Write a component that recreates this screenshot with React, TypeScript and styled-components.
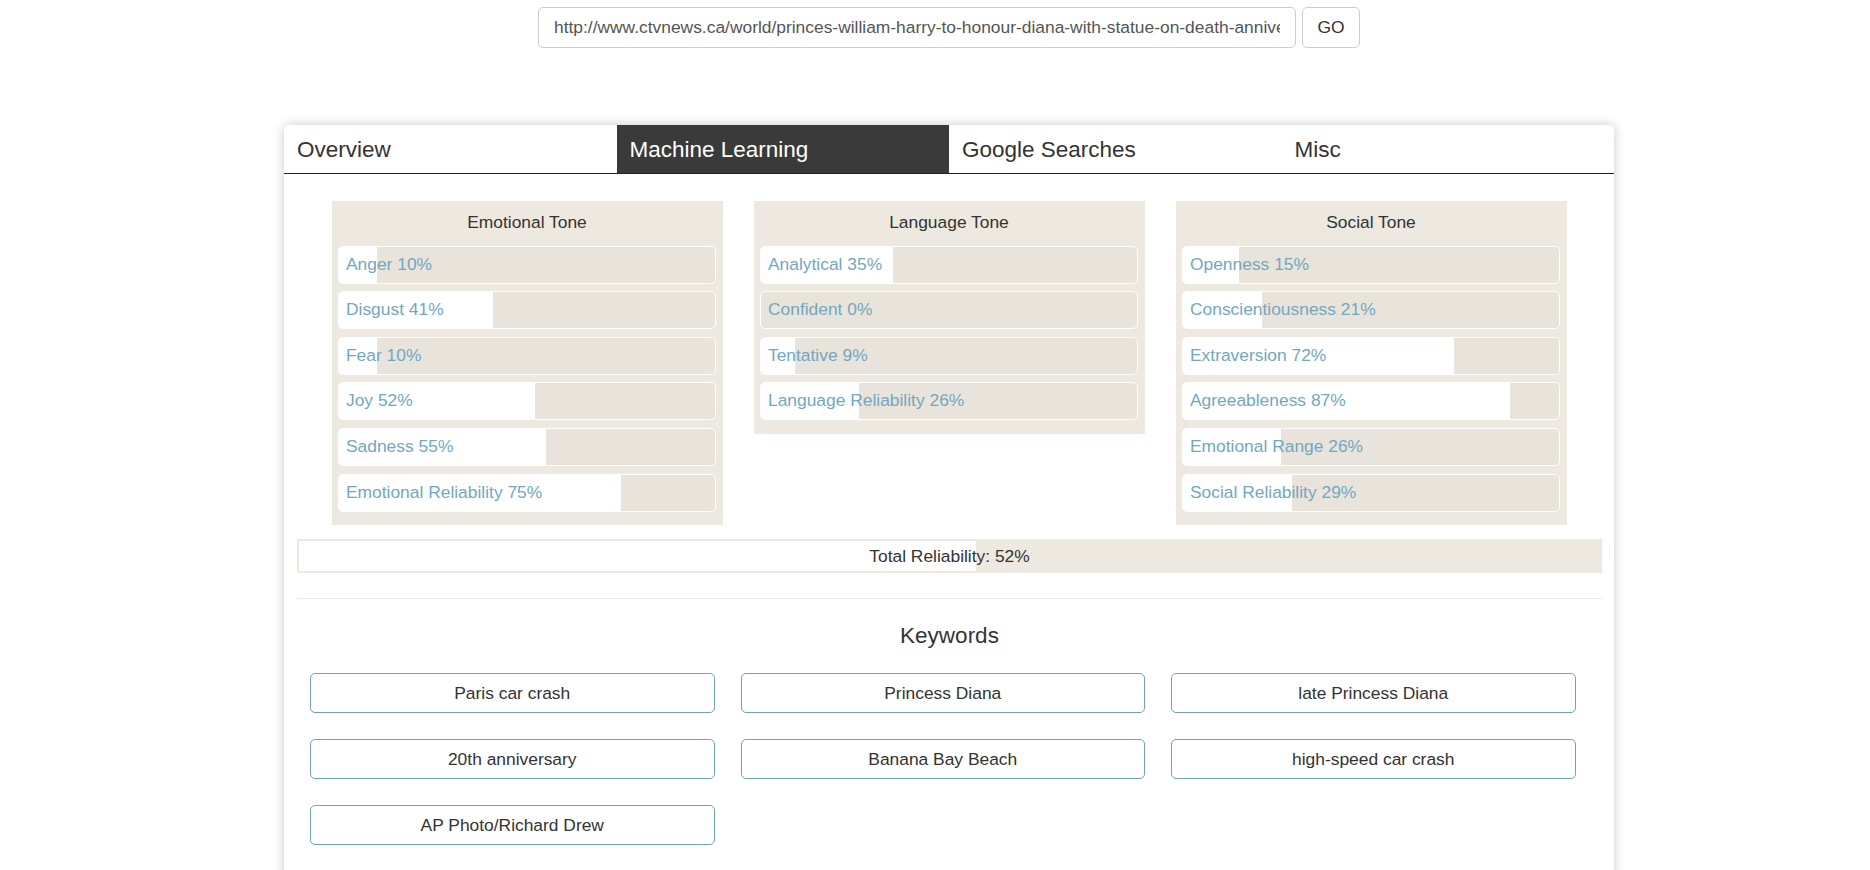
import styled, { createGlobalStyle } from "styled-components";

type Meter = {
  label: string;
  value: number;
};

type TonePanel = {
  title: string;
  items: Meter[];
};

const panels: TonePanel[] = [
  {
    title: "Emotional Tone",
    items: [
      { label: "Anger", value: 10 },
      { label: "Disgust", value: 41 },
      { label: "Fear", value: 10 },
      { label: "Joy", value: 52 },
      { label: "Sadness", value: 55 },
      { label: "Emotional Reliability", value: 75 },
    ],
  },
  {
    title: "Language Tone",
    items: [
      { label: "Analytical", value: 35 },
      { label: "Confident", value: 0 },
      { label: "Tentative", value: 9 },
      { label: "Language Reliability", value: 26 },
    ],
  },
  {
    title: "Social Tone",
    items: [
      { label: "Openness", value: 15 },
      { label: "Conscientiousness", value: 21 },
      { label: "Extraversion", value: 72 },
      { label: "Agreeableness", value: 87 },
      { label: "Emotional Range", value: 26 },
      { label: "Social Reliability", value: 29 },
    ],
  },
];

const keywords = [
  "Paris car crash",
  "Princess Diana",
  "late Princess Diana",
  "20th anniversary",
  "Banana Bay Beach",
  "high-speed car crash",
  "AP Photo/Richard Drew",
];

const tabs = ["Overview", "Machine Learning", "Google Searches", "Misc"];

const GlobalStyle = createGlobalStyle`
  * {
    box-sizing: border-box;
  }
  body {
    margin: 0;
    background: #fff;
    font-family: "Liberation Sans", Arial, sans-serif;
    color: #333;
  }
`;

export default function App() {
  return (
    <>
      <GlobalStyle />
      <Page>
        <Container>
          <SearchBar>
            <UrlInput
              readOnly
              defaultValue="http://www.ctvnews.ca/world/princes-william-harry-to-honour-diana-with-statue-on-death-anniversary-1.3543576"
            />
            <GoButton>GO</GoButton>
          </SearchBar>

          <Card>
            <TabBar>
              {tabs.map((t) => (
                <Tab key={t} $active={t === "Machine Learning"}>
                  {t}
                </Tab>
              ))}
            </TabBar>

            <CardBody>
              <PanelRow>
                {panels.map((p) => (
                  <Panel key={p.title}>
                    <PanelTitle>{p.title}</PanelTitle>
                    <MeterList>
                      {p.items.map((m) => (
                        <MeterBar key={m.label} $pct={m.value}>
                          {m.label} {m.value}%
                        </MeterBar>
                      ))}
                    </MeterList>
                  </Panel>
                ))}
              </PanelRow>

              <TotalBar $pct={52}>Total Reliability: 52%</TotalBar>

              <Divider />

              <SectionTitle>Keywords</SectionTitle>
              <KeywordGrid>
                {keywords.map((k) => (
                  <Keyword key={k}>{k}</Keyword>
                ))}
              </KeywordGrid>
            </CardBody>
          </Card>
        </Container>
      </Page>
    </>
  );
}

const Page = styled.div`
  padding-left: 28px;
  min-height: 870px;
`;

const Container = styled.div`
  width: 1330px;
  margin: 0 auto;
`;

const SearchBar = styled.div`
  display: flex;
  justify-content: center;
  gap: 6px;
  padding-top: 7px;
`;

const UrlInput = styled.input`
  width: 758px;
  height: 41px;
  padding: 0 15px;
  border: 1px solid #ccc;
  border-radius: 5px;
  font-family: inherit;
  font-size: 17.4px;
  color: #555;
  outline: none;
`;

const GoButton = styled.button`
  width: 58px;
  height: 41px;
  border: 1px solid #ccc;
  border-radius: 5px;
  background: #fff;
  font-family: inherit;
  font-size: 17.4px;
  color: #333;
`;

const Card = styled.div`
  margin-top: 77px;
  background: #fff;
  border-radius: 5px;
  box-shadow: 0 0 12px rgba(0, 0, 0, 0.22);
  padding-bottom: 40px;
`;

const TabBar = styled.div`
  display: grid;
  grid-template-columns: repeat(4, 1fr);
  border-bottom: 1px solid #222;
`;

const Tab = styled.div<{ $active?: boolean }>`
  height: 48px;
  line-height: 50px;
  padding-left: 13px;
  font-size: 22.5px;
  color: ${(p) => (p.$active ? "#fff" : "#333")};
  background: ${(p) => (p.$active ? "#3a3a3a" : "transparent")};
  &:first-child {
    border-top-left-radius: 5px;
  }
`;

const CardBody = styled.div`
  padding: 0 12px 0 13px;
`;

const PanelRow = styled.div`
  display: flex;
  justify-content: center;
  align-items: flex-start;
  gap: 31px;
  padding-top: 27px;
`;

const Panel = styled.div`
  width: 391px;
  background: #ede9e0;
  padding: 0 7px 13.5px 6px;
`;

const PanelTitle = styled.div`
  height: 44.7px;
  line-height: 42.5px;
  text-align: center;
  font-size: 17.4px;
  color: #333;
`;

const MeterList = styled.div`
  display: flex;
  flex-direction: column;
  gap: 7.6px;
`;

const MeterBar = styled.div<{ $pct: number }>`
  height: 38px;
  line-height: 34.5px;
  padding-left: 7px;
  border: 1px solid #fff;
  border-radius: 5px;
  font-size: 17.4px;
  color: #72a7bf;
  background: linear-gradient(
    to right,
    #fff ${(p) => p.$pct}%,
    #e8e4dc ${(p) => p.$pct}%
  );
`;

const TotalBar = styled.div<{ $pct: number }>`
  margin-top: 14px;
  height: 34px;
  line-height: 30px;
  padding: 2px;
  text-align: center;
  font-size: 17.4px;
  color: #333;
  background: linear-gradient(
        to right,
        #fff ${(p) => p.$pct}%,
        #ede9e0 ${(p) => p.$pct}%
      )
      content-box,
    #ede9e0;
`;

const Divider = styled.hr`
  margin: 25px 0 0;
  border: 0;
  border-top: 1px solid #eee;
`;

const SectionTitle = styled.h4`
  margin: 22.5px 0 0;
  line-height: 27px;
  text-align: center;
  font-size: 22.5px;
  font-weight: 400;
  color: #333;
`;

const KeywordGrid = styled.div`
  display: grid;
  grid-template-columns: repeat(3, 404.5px);
  column-gap: 26px;
  row-gap: 26px;
  padding: 24.5px 0 0 13px;
`;

const Keyword = styled.div`
  height: 40px;
  line-height: 38px;
  border: 1px solid #6ea3b8;
  border-radius: 5px;
  text-align: center;
  font-size: 17.4px;
  color: #333;
  background: #fff;
`;
